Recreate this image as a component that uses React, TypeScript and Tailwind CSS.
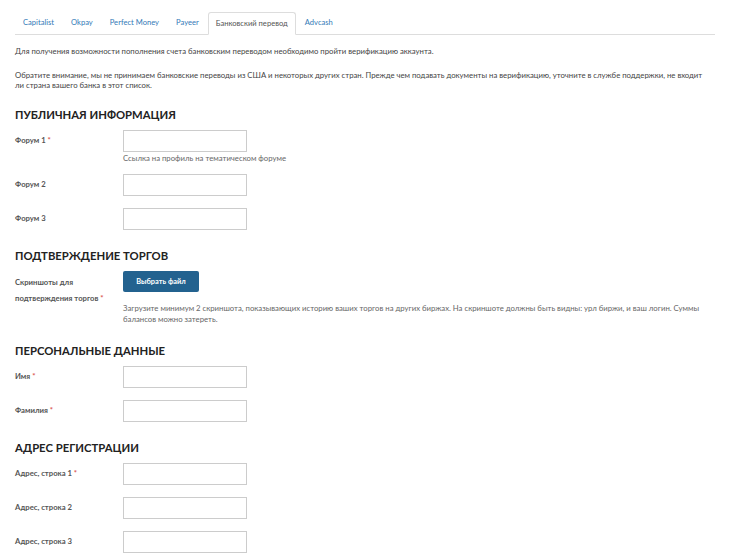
import { type ReactNode } from "react";

const tabs = ["Capitalist", "Okpay", "Perfect Money", "Payeer", "Банковский перевод", "Advcash"];
const active = "Банковский перевод";

function Req() {
  return <span className="text-[#d9534f]"> *</span>;
}

function Heading({ children }: { children: ReactNode }) {
  return (
    <h3 className="text-[11.3px] font-bold uppercase leading-[12px] text-[#222]">{children}</h3>
  );
}

function Field({
  label,
  required,
  hint,
}: {
  label: string;
  required?: boolean;
  hint?: string;
}) {
  return (
    <div className="flex">
      <label className="flex h-[22px] w-[108px] shrink-0 items-center text-[7.7px] font-bold text-[#555]">
        <span>
          {label}
          {required && <Req />}
        </span>
      </label>
      <div>
        <input
          type="text"
          className="block h-[22px] w-[124px] border border-[#ccc] bg-white"
        />
        {hint && (
          <p className="mt-[1px] mb-[-1px] text-[7.75px] leading-[10px] text-[#666]">{hint}</p>
        )}
      </div>
    </div>
  );
}

export default function App() {
  return (
    <div
      className="min-h-[559px] bg-white px-[15px] pt-[12px] text-[#444]"
      style={{ fontFamily: "Lato, 'Open Sans', sans-serif" }}
    >
      <nav className="flex w-[700px] border-b border-[#ddd] text-[7.6px]">
        {tabs.map((t) =>
          t === active ? (
            <span
              key={t}
              className="-mb-px mr-[1px] flex h-[23px] items-center rounded-t-[3px] border border-b-white border-[#ddd] bg-white px-[7px] text-[#555]"
            >
              {t}
            </span>
          ) : (
            <span key={t} className="mr-[1px] flex h-[22px] items-center px-[8px] text-[#337ab7]">
              {t}
            </span>
          ),
        )}
      </nav>

      <div className="text-[7.75px] leading-[10px] text-[#444]">
        <p className="mt-[11px]">
          Для получения возможности пополнения счета банковским переводом необходимо пройти
          верификацию аккаунта.
        </p>
        <p className="mt-[14px] w-[690px]">
          Обратите внимание, мы не принимаем банковские переводы из США и некоторых других
          стран. Прежде чем подавать документы на верификацию, уточните в службе поддержки, не
          входит ли страна вашего банка в этот список.
        </p>
      </div>

      <section className="mt-[19px]">
        <Heading>Публичная информация</Heading>
        <div className="mt-[9px] space-y-[12px]">
          <Field label="Форум 1" required hint="Ссылка на профиль на тематическом форуме" />
          <Field label="Форум 2" />
          <Field label="Форум 3" />
        </div>
      </section>

      <section className="mt-[20px]">
        <Heading>Подтверждение торгов</Heading>
        <div className="mt-[9px] flex">
          <label className="w-[108px] shrink-0 pt-[3px] text-[7.7px] font-bold leading-[16px] text-[#555]">
            Скриншоты для
            <br />
            подтверждения торгов
            <Req />
          </label>
          <div>
            <button
              type="button"
              className="block h-[21px] w-[76px] rounded-[2px] bg-[#23628f] text-[7.4px] font-bold text-white"
            >
              Выбрать файл
            </button>
            <p className="mt-[11px] w-[592px] text-[7.75px] leading-[11px] text-[#666]">
              Загрузите минимум 2 скриншота, показывающих историю ваших торгов на других
              биржах. На скриншоте должны быть видны: урл биржи, и ваш логин. Суммы балансов
              можно затереть.
            </p>
          </div>
        </div>
      </section>

      <section className="mt-[20px]">
        <Heading>Персональные данные</Heading>
        <div className="mt-[9px] space-y-[12px]">
          <Field label="Имя" required />
          <Field label="Фамилия" required />
        </div>
      </section>

      <section className="mt-[20px]">
        <Heading>Адрес регистрации</Heading>
        <div className="mt-[9px] space-y-[12px]">
          <Field label="Адрес, строка 1" required />
          <Field label="Адрес, строка 2" />
          <Field label="Адрес, строка 3" />
        </div>
      </section>
    </div>
  );
}
